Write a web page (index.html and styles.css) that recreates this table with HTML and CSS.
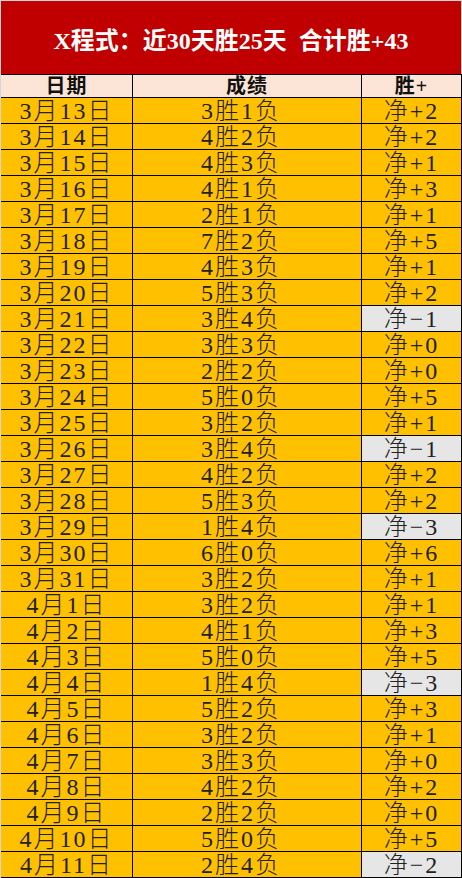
FILE: index.html
```html
<!DOCTYPE html>
<html lang="zh-CN">
<head>
<meta charset="utf-8">
<title>X程式</title>
<link rel="stylesheet" href="styles.css">
</head>
<body>
<div class="page">
  <header class="banner">X程式：近30天胜25天&nbsp;&nbsp;合计胜+43</header>
  <div class="table">
    <div class="th">日期</div><div class="th">成绩</div><div class="th">胜+</div>
    <div class="td">3月13日</div><div class="td mid">3胜1负</div><div class="td">净+2</div>
    <div class="td">3月14日</div><div class="td mid">4胜2负</div><div class="td">净+2</div>
    <div class="td">3月15日</div><div class="td mid">4胜3负</div><div class="td">净+1</div>
    <div class="td">3月16日</div><div class="td mid">4胜1负</div><div class="td">净+3</div>
    <div class="td">3月17日</div><div class="td mid">2胜1负</div><div class="td">净+1</div>
    <div class="td">3月18日</div><div class="td mid">7胜2负</div><div class="td">净+5</div>
    <div class="td">3月19日</div><div class="td mid">4胜3负</div><div class="td">净+1</div>
    <div class="td">3月20日</div><div class="td mid">5胜3负</div><div class="td">净+2</div>
    <div class="td">3月21日</div><div class="td mid">3胜4负</div><div class="td neg">净−1</div>
    <div class="td">3月22日</div><div class="td mid">3胜3负</div><div class="td">净+0</div>
    <div class="td">3月23日</div><div class="td mid">2胜2负</div><div class="td">净+0</div>
    <div class="td">3月24日</div><div class="td mid">5胜0负</div><div class="td">净+5</div>
    <div class="td">3月25日</div><div class="td mid">3胜2负</div><div class="td">净+1</div>
    <div class="td">3月26日</div><div class="td mid">3胜4负</div><div class="td neg">净−1</div>
    <div class="td">3月27日</div><div class="td mid">4胜2负</div><div class="td">净+2</div>
    <div class="td">3月28日</div><div class="td mid">5胜3负</div><div class="td">净+2</div>
    <div class="td">3月29日</div><div class="td mid">1胜4负</div><div class="td neg">净−3</div>
    <div class="td">3月30日</div><div class="td mid">6胜0负</div><div class="td">净+6</div>
    <div class="td">3月31日</div><div class="td mid">3胜2负</div><div class="td">净+1</div>
    <div class="td">4月1日</div><div class="td mid">3胜2负</div><div class="td">净+1</div>
    <div class="td">4月2日</div><div class="td mid">4胜1负</div><div class="td">净+3</div>
    <div class="td">4月3日</div><div class="td mid">5胜0负</div><div class="td">净+5</div>
    <div class="td">4月4日</div><div class="td mid">1胜4负</div><div class="td neg">净−3</div>
    <div class="td">4月5日</div><div class="td mid">5胜2负</div><div class="td">净+3</div>
    <div class="td">4月6日</div><div class="td mid">3胜2负</div><div class="td">净+1</div>
    <div class="td">4月7日</div><div class="td mid">3胜3负</div><div class="td">净+0</div>
    <div class="td">4月8日</div><div class="td mid">4胜2负</div><div class="td">净+2</div>
    <div class="td">4月9日</div><div class="td mid">2胜2负</div><div class="td">净+0</div>
    <div class="td">4月10日</div><div class="td mid">5胜0负</div><div class="td">净+5</div>
    <div class="td">4月11日</div><div class="td mid">2胜4负</div><div class="td neg">净−2</div>
  </div>
</div>
</body>
</html>
```

FILE: styles.css
```css
html, body {
  margin: 0;
  padding: 0;
  background: #d6d6d6;
}
.page {
  padding: 1px 0 0 1px;
  width: 461px;
  font-family: "Liberation Serif", "Noto Sans CJK SC", serif;
}
.banner {
  height: 73px;
  width: 460px;
  background: #c00000;
  color: #ffffff;
  font-weight: bold;
  font-size: 24px;
  display: flex;
  align-items: center;
  justify-content: center;
  box-sizing: border-box;
  padding-top: 2px;
}
.table {
  display: grid;
  grid-template-columns: 131px 228px 99px;
  grid-template-rows: 22px;
  grid-auto-rows: 25px;
  gap: 1px;
  padding: 1px 1px 1px 0;
  background: #000000;
  width: 461px;
  box-sizing: border-box;
}
.th {
  background: #fce4d6;
  font-weight: bold;
  font-size: 20px;
  color: #111;
  display: flex;
  align-items: center;
  justify-content: center;
  line-height: 22px;
  letter-spacing: 1px;
}
.td {
  background: #ffc000;
  color: #222;
  font-size: 24px;
  font-weight: 300;
  letter-spacing: 2px;
  display: flex;
  align-items: center;
  justify-content: center;
  line-height: 25px;
  padding-top: 2px;
  box-sizing: border-box;
  white-space: nowrap;
}
.td.mid {
  padding-right: 12px;
}
.td.neg {
  background: #e6e6e6;
}
```
